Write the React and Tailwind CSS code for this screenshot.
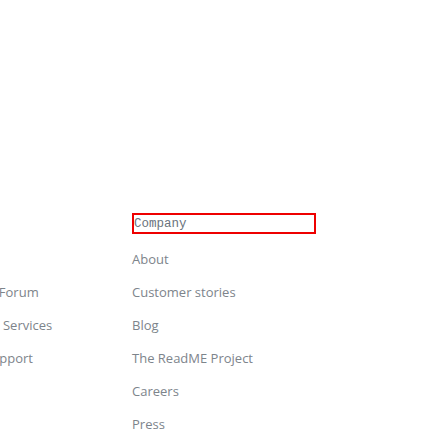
import React from 'react';

const columns = [
  {
    title: 'Support',
    links: ['Docs', 'Community Forum', 'Professional Services', 'Premium Support', 'Skills', 'Status', 'Contact GitHub'],
  },
  {
    title: 'Company',
    links: ['About', 'Customer stories', 'Blog', 'The ReadME Project', 'Careers', 'Press'],
  },
];

const FooterColumn = ({ title, links, className, outlined }) => (
  <div className={className}>
    <h2
      className={`h-[21px] text-[12.5px] leading-[18px] text-[#6a737d] font-normal whitespace-nowrap ${
        outlined ? 'border-2 border-[#ee0000]' : 'border-2 border-transparent'
      }`}
      style={{ fontFamily: '"Liberation Mono", monospace' }}
    >
      {title}
    </h2>
    <ul className="mt-4 flex flex-col gap-[15px]">
      {links.map((link) => (
        <li key={link} className="text-[13px] leading-[18px] text-[#7d848b] whitespace-nowrap">
          {link}
        </li>
      ))}
    </ul>
  </div>
);

export default function App() {
  return (
    <div
      className="w-[448px] h-[448px] overflow-hidden bg-white"
      style={{ fontFamily: '"Open Sans", "Noto Sans", sans-serif' }}
    >
      <div className="flex pt-[213px]">
        <FooterColumn {...columns[0]} className="w-[207px] shrink-0 -ml-[75px]" />
        <FooterColumn {...columns[1]} className="w-[184px] shrink-0" outlined />
      </div>
    </div>
  );
}
